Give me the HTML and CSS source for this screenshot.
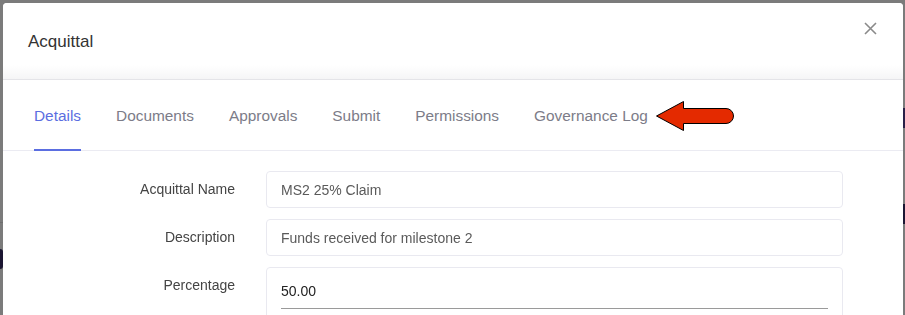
FILE: index.html
```html
<!DOCTYPE html>
<html lang="en">
<head>
<meta charset="UTF-8">
<meta name="viewport" content="width=device-width, initial-scale=1.0">
<link rel="stylesheet" href="styles.css">
<title>Acquittal</title>
</head>
<body>
<div class="page">
  <div class="rail rail-left">
    <div class="rail-line"></div>
    <div class="avatar-edge"></div>
  </div>
  <div class="page-main"></div>
  <div class="rail rail-right">
    <div class="nav-block"></div>
    <div class="nav-block nav-block-dark"></div>
  </div>
</div>

<div class="overlay">
  <div class="modal">
    <div class="modal-header">
      <h2 class="modal-title">Acquittal</h2>
      <button class="close-btn" aria-label="Close">
        <svg width="13" height="13" viewBox="0 0 13 13"><path d="M1 1 L12 12 M12 1 L1 12" stroke="#8a8a8a" stroke-width="1.6" fill="none"/></svg>
      </button>
    </div>

    <div class="tabs">
      <a class="tab active">Details</a>
      <a class="tab">Documents</a>
      <a class="tab">Approvals</a>
      <a class="tab">Submit</a>
      <a class="tab">Permissions</a>
      <a class="tab">Governance Log</a>
      <svg class="pointer" width="82" height="32" viewBox="0 0 82 32">
        <path d="M1.5 16 L28.5 1.5 L28.5 8.5 L71 8.5 A7.5 7.5 0 0 1 71 23.5 L28.5 23.5 L28.5 30.5 Z" fill="#e42a00" stroke="#000" stroke-width="1"/>
      </svg>
    </div>

    <div class="form">
      <label class="form-label">Acquittal Name</label>
      <div class="field">MS2 25% Claim</div>

      <label class="form-label">Description</label>
      <div class="field">Funds received for milestone 2</div>

      <label class="form-label">Percentage</label>
      <div class="field field-number">
        <div class="number-input">50.00</div>
      </div>
    </div>
  </div>
</div>
</body>
</html>
```

FILE: styles.css
```css
html, body {
  margin: 0;
  padding: 0;
  height: 100%;
  overflow: hidden;
}
body {
  font-family: "Liberation Sans", Arial, sans-serif;
  background-color: #7b7b7b;
}
.page {
  display: grid;
  grid-template-columns: 3px 1fr 2px;
  height: 100%;
}
.rail-line {
  height: 1px;
  margin-top: 222px;
  background-color: #6e6e6e;
}
.avatar-edge {
  margin-top: 26px;
  height: 20px;
  width: 3px;
  background-color: #1b1632;
  border-radius: 0 10px 10px 0;
}
.nav-block {
  margin-top: 108px;
  height: 20px;
  background-color: #2a2048;
}
.nav-block-dark {
  margin-top: 76px;
  background-color: #1c1633;
}

.overlay {
  position: fixed;
  top: 3px;
  left: 3px;
  right: 2px;
  bottom: 0;
}
.modal {
  background-color: #ffffff;
  border-radius: 4px 4px 0 0;
  height: 100%;
  overflow: hidden;
}
.modal-header {
  display: flex;
  justify-content: space-between;
  align-items: center;
  height: 77px;
  padding: 1px 25px 0;
  box-sizing: border-box;
  border-bottom: 1px solid #e4e4e8;
  background: linear-gradient(to bottom, #ffffff 82%, #f5f5f6 100%);
}
.modal-title {
  margin: 0;
  font-size: 17px;
  font-weight: normal;
  line-height: 20px;
  color: #333333;
}
.close-btn {
  align-self: flex-start;
  margin-top: 18px;
  margin-right: 1px;
  padding: 0;
  border: none;
  background: none;
  cursor: pointer;
  line-height: 0;
}

.tabs {
  display: flex;
  align-items: center;
  height: 71px;
  box-sizing: border-box;
  padding: 2px 0 0 31px;
  border-bottom: 1px solid #ebebf2;
}
.tab {
  position: relative;
  margin-right: 35px;
  font-size: 15.4px;
  line-height: 20px;
  color: #7c7c88;
  cursor: pointer;
}
.tab.active {
  color: #5b6ee1;
}
.tab.active::after {
  content: "";
  position: absolute;
  left: 0;
  right: 0;
  top: 43px;
  height: 2px;
  background-color: #5b6ee1;
}
.pointer {
  margin-left: -28px;
  margin-top: 0;
}

.form {
  display: grid;
  grid-template-columns: 232px 1fr;
  column-gap: 31px;
  row-gap: 11px;
  padding: 20px 60px 0 0;
}
.form-label {
  text-align: right;
  padding-top: 8px;
  font-size: 14px;
  line-height: 20px;
  color: #444444;
}
.field {
  height: 37px;
  box-sizing: border-box;
  padding: 8px 14px;
  border: 1px solid #e9e9f0;
  border-radius: 4px;
  font-size: 14px;
  line-height: 20px;
  color: #5a5a5a;
}
.field-number {
  height: 60px;
  padding: 13px 14px 0;
}
.number-input {
  padding-bottom: 7px;
  border-bottom: 1px solid #9a9a9a;
  color: #222222;
}
```
